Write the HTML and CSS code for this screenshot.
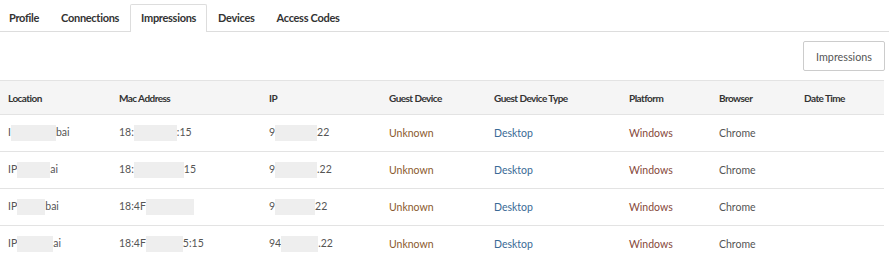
FILE: index.html
```
<!DOCTYPE html>
<html lang="en">

<head>
    <meta charset="UTF-8">
    <title>Guest Impressions</title>
    <link rel="stylesheet" href="styles.css">
</head>

<body>
    <ul class="tabs">
        <li class="tab">Profile</li>
        <li class="tab">Connections</li>
        <li class="tab active">Impressions</li>
        <li class="tab">Devices</li>
        <li class="tab">Access Codes</li>
    </ul>

    <div class="toolbar">
        <button class="btn">Impressions</button>
    </div>

    <table class="grid">
        <thead>
            <tr>
                <th class="c-loc">Location</th>
                <th class="c-mac">Mac Address</th>
                <th class="c-ip">IP</th>
                <th class="c-guest">Guest Device</th>
                <th class="c-type">Guest Device Type</th>
                <th class="c-plat">Platform</th>
                <th class="c-brow">Browser</th>
                <th>Date Time</th>
            </tr>
        </thead>
        <tbody>
            <tr>
                <td>I<span class="blur" style="width:45px"></span>bai</td>
                <td>18:<span class="blur" style="width:43px"></span>:15</td>
                <td>9<span class="blur" style="width:42px"></span>22</td>
                <td class="unknown">Unknown</td>
                <td class="desktop">Desktop</td>
                <td class="windows">Windows</td>
                <td class="chrome">Chrome</td>
                <td></td>
            </tr>
            <tr>
                <td>IP<span class="blur" style="width:33px"></span>ai</td>
                <td>18:<span class="blur" style="width:50px"></span>15</td>
                <td>9<span class="blur" style="width:42px"></span>.22</td>
                <td class="unknown">Unknown</td>
                <td class="desktop">Desktop</td>
                <td class="windows">Windows</td>
                <td class="chrome">Chrome</td>
                <td></td>
            </tr>
            <tr>
                <td>IP<span class="blur" style="width:28px"></span>bai</td>
                <td>18:4F<span class="blur" style="width:48px"></span></td>
                <td>9<span class="blur" style="width:40px"></span>22</td>
                <td class="unknown">Unknown</td>
                <td class="desktop">Desktop</td>
                <td class="windows">Windows</td>
                <td class="chrome">Chrome</td>
                <td></td>
            </tr>
            <tr>
                <td>IP<span class="blur" style="width:36px"></span>ai</td>
                <td>18:4F<span class="blur" style="width:37px"></span>5:15</td>
                <td>94<span class="blur" style="width:37px"></span>.22</td>
                <td class="unknown">Unknown</td>
                <td class="desktop">Desktop</td>
                <td class="windows">Windows</td>
                <td class="chrome">Chrome</td>
                <td></td>
            </tr>
        </tbody>
    </table>
</body>

</html>
```

FILE: styles.css
```
body {
    margin: 0;
    font-family: Lato, 'Open Sans', sans-serif;
    font-size: 10.5px;
    color: #555;
    background: #fff;
}

.tabs {
    display: flex;
    list-style: none;
    margin: 0;
    padding: 4px 0 0 0;
    margin-left: -2px;
    border-bottom: 1px solid #ddd;
    width: 891px;
}

.tab {
    padding: 0 10px;
    height: 26px;
    line-height: 25px;
    font-weight: bold;
    font-size: 11px;
    letter-spacing: -0.3px;
    color: #333;
    border: 1px solid transparent;
    border-bottom: none;
    margin-bottom: -1px;
}

.tab.active {
    border-color: #ddd;
    background: #fff;
    height: 27px;
    border-radius: 2px 2px 0 0;
}

.toolbar {
    display: flex;
    justify-content: flex-end;
    padding: 9px 4px 9px 0;
}

.btn {
    font-family: inherit;
    font-size: 10.75px;
    color: #555;
    background: #fff;
    border: 1px solid #ccc;
    border-radius: 2px;
    width: 82px;
    height: 30px;
    padding: 0;
}

.grid {
    width: 884px;
    border-collapse: collapse;
}

.grid th,
.grid td {
    text-align: left;
    padding: 0 8px;
    white-space: nowrap;
    border-top: 1px solid #e3e3e3;
}

.grid th {
    background: #f5f5f5;
    height: 33px;
    font-weight: bold;
    font-size: 10px;
    letter-spacing: -0.55px;
    color: #333;
}

.grid td {
    height: 36px;
}

.c-loc { width: 95px; }
.c-mac { width: 134px; }
.c-ip { width: 104px; }
.c-guest { width: 89px; }
.c-type { width: 119px; }
.c-plat { width: 74px; }
.c-brow { width: 69px; }

.blur {
    display: inline-block;
    height: 16px;
    vertical-align: middle;
    background: #eeeeee;
}

.unknown { color: #8b5a2e; }
.desktop { color: #3a6a96; }
.windows { color: #86483a; }
.chrome { color: #555; }
```
